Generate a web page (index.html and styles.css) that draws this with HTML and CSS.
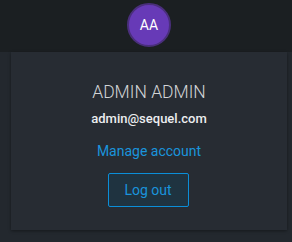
FILE: index.html
```html
<!DOCTYPE html>
<html>
<head>
<meta charset="utf-8">
<link rel="stylesheet" href="styles.css">
</head>
<body>
<div class="topbar">
  <div class="avatar">AA</div>
</div>
<div class="main">
  <div class="card">
    <div class="name">ADMIN ADMIN</div>
    <div class="email">admin@sequel.com</div>
    <a class="manage" href="#">Manage account</a>
    <button class="logout">Log out</button>
  </div>
</div>
</body>
</html>
```
FILE: styles.css
```css
html, body {
  margin: 0;
  padding: 0;
}
body {
  width: 292px;
  height: 242px;
  background: #23282e;
  font-family: Roboto, "Liberation Sans", sans-serif;
  overflow: hidden;
}
.topbar {
  height: 52px;
  background: #1b1f22;
  display: flex;
  justify-content: center;
  align-items: flex-start;
  padding-top: 3px;
  box-sizing: border-box;
}
.avatar {
  width: 44px;
  height: 44px;
  border-radius: 50%;
  background: #673ab7;
  border: 2px solid #4a2f7c;
  box-sizing: border-box;
  color: #fff;
  font-size: 14px;
  display: flex;
  align-items: center;
  justify-content: center;
  margin-left: 6px;
}
.main {
  padding: 0 5px 12px 11px;
}
.card {
  height: 178px;
  background: #272c33;
  box-shadow: 0 1px 3px rgba(0,0,0,0.4);
  display: flex;
  flex-direction: column;
  align-items: center;
  padding-top: 30px;
  box-sizing: border-box;
}
.name {
  color: #d2d4d6;
  font-size: 17.5px;
  font-weight: 300;
  line-height: 21px;
}
.email {
  color: #eceef0;
  font-size: 13px;
  font-weight: 500;
  line-height: 16px;
  margin-top: 8px;
}
.manage {
  color: #1a94dc;
  font-size: 14px;
  text-decoration: none;
  line-height: 18px;
  margin-top: 15px;
}
.logout {
  margin-top: 13px;
  margin-right: 2px;
  width: 81px;
  height: 34px;
  background: #1f3340;
  border: 1px solid #0b8ed8;
  border-radius: 2px;
  color: #1a94dc;
  font-family: Roboto, "Liberation Sans", sans-serif;
  font-size: 14px;
  padding: 0;
}
```
